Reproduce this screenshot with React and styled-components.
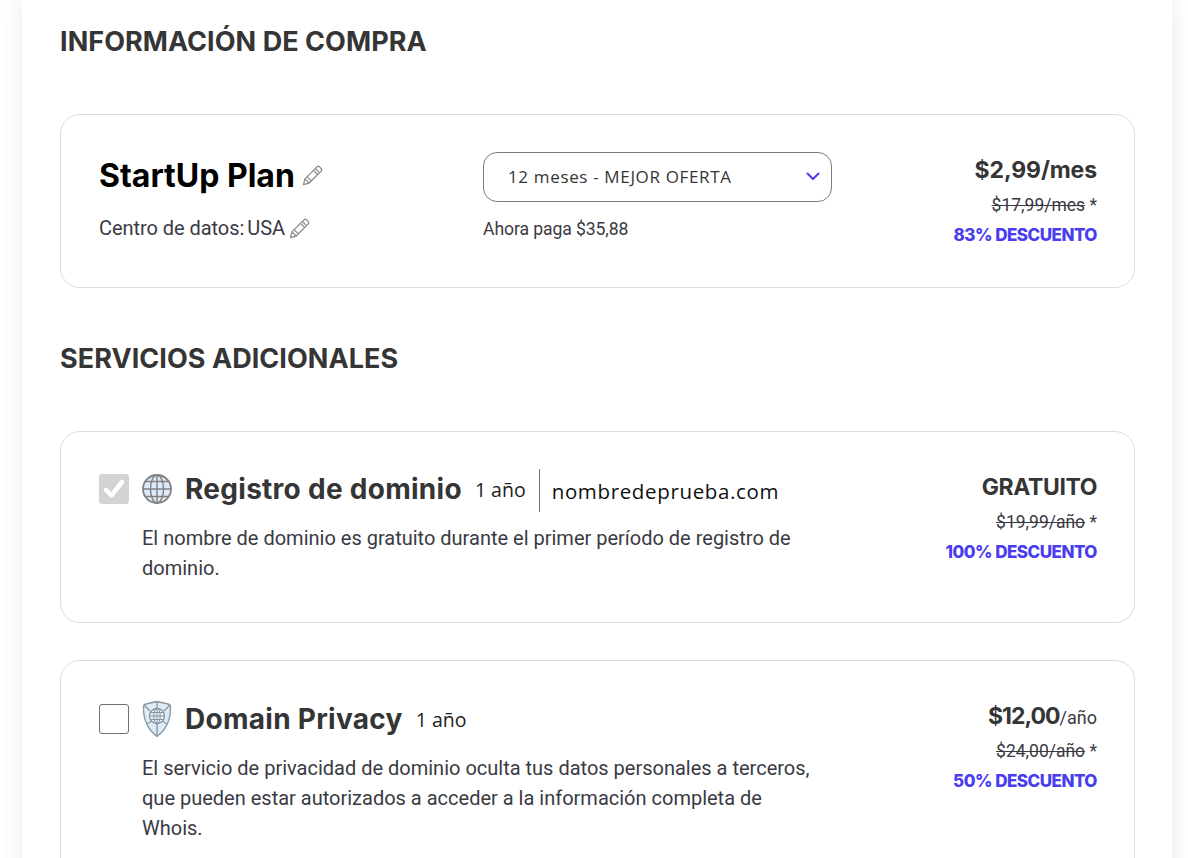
import React from 'react';
import styled, { createGlobalStyle } from 'styled-components';

const GlobalStyle = createGlobalStyle`
  html, body {
    margin: 0;
    padding: 0;
    height: 858px;
    overflow: hidden;
    background: #fff;
    font-family: Roboto, "Liberation Sans", sans-serif;
    color: #353535;
  }
`;

const Page = styled.div`
  width: 1150px;
  margin-left: 22px;
  padding: 0 37px 0 38px;
  box-sizing: border-box;
  background: #fff;
  box-shadow: 0 0 22px rgba(0, 0, 0, 0.09);
  height: 1000px;
`;

const SectionTitle = styled.h2`
  margin: 0;
  height: ${(p) => p.$height}px;
  padding-top: ${(p) => p.$top}px;
  box-sizing: border-box;
  font-family: Inter, sans-serif;
  font-weight: 700;
  font-size: 27px;
  line-height: 34px;
  letter-spacing: 0.05px;
  color: #353535;
`;

const Card = styled.section`
  display: flex;
  justify-content: space-between;
  box-sizing: border-box;
  min-height: ${(p) => p.$height}px;
  margin-bottom: ${(p) => p.$gap || 0}px;
  padding: 37px 37px 0 38px;
  border: 1px solid #dcdcdc;
  border-radius: 20px;
`;

const PlanColumn = styled.div`
  width: 384px;
`;

const PlanName = styled.div`
  display: flex;
  align-items: center;
  gap: 7px;
  height: 46px;
  font-family: Inter, sans-serif;
  font-weight: 700;
  font-size: 32px;
  letter-spacing: 0;
  color: #000;
`;

const DataCenter = styled.div`
  display: flex;
  align-items: center;
  margin-top: 15px;
  font-size: 20px;
  line-height: 30px;
  letter-spacing: -0.05px;
  color: #3a3a44;
`;

const DataValue = styled.span`
  margin-left: 3px;
  margin-right: 4px;
`;

const TermColumn = styled.div`
  width: 349px;
  margin-right: auto;
`;

const SelectBox = styled.div`
  display: flex;
  align-items: center;
  justify-content: space-between;
  box-sizing: border-box;
  height: 50px;
  padding: 0 11px 2px 24px;
  border: 1px solid #7d7d7d;
  border-radius: 14px;
  font-family: "Open Sans", sans-serif;
  font-size: 17px;
  letter-spacing: 0.65px;
  color: #353535;
`;

const PayNow = styled.div`
  margin-top: 15px;
  font-size: 17.6px;
  line-height: 24px;
  letter-spacing: -0.1px;
  color: #3a3a44;
`;

const PriceColumn = styled.div`
  display: flex;
  flex-direction: column;
  align-items: flex-end;
  flex-shrink: 0;
`;

const Price = styled.div`
  font-family: Inter, sans-serif;
  font-weight: 700;
  font-size: 23px;
  line-height: 36px;
  letter-spacing: ${(p) => p.$spacing}px;
  color: #353535;
`;

const PriceUnit = styled.span`
  font-family: Roboto, sans-serif;
  font-weight: 400;
  font-size: 18px;
  line-height: 1;
  letter-spacing: 0;
  color: #3a3a44;
`;

const OldPrice = styled.div`
  margin-top: 2px;
  font-size: 17.5px;
  line-height: 30px;
  color: #3a3a44;
`;

const Struck = styled.span`
  text-decoration: line-through;
`;

const Discount = styled.div`
  font-family: Inter, sans-serif;
  font-weight: 800;
  font-size: 17px;
  line-height: 30px;
  letter-spacing: -0.5px;
  color: #4a3df0;
`;

const ServiceColumn = styled.div`
  width: 716px;
  margin-top: ${(p) => p.$top}px;
`;

const ServiceHead = styled.div`
  display: flex;
  align-items: center;
  height: 42px;
`;

const CheckBox = styled.div`
  display: flex;
  align-items: center;
  justify-content: center;
  box-sizing: border-box;
  flex-shrink: 0;
  width: 30px;
  height: 30px;
  margin-right: 13px;
  border-radius: 3px;
  background: ${(p) => (p.$checked ? '#d3d3d3' : '#fff')};
  border: ${(p) => (p.$checked ? 'none' : '1px solid #6f6f6f')};
`;

const IconSlot = styled.div`
  display: flex;
  flex-shrink: 0;
  width: 30px;
  margin-right: 13px;
`;

const ServiceName = styled.div`
  font-family: Inter, sans-serif;
  font-weight: 700;
  font-size: 28px;
  letter-spacing: 0.28px;
  color: #353535;
`;

const Term = styled.div`
  margin-left: 13px;
  font-family: "Open Sans", sans-serif;
  font-size: 19.5px;
  color: #222;
`;

const DomainName = styled.div`
  display: flex;
  align-items: center;
  height: 43px;
  margin: 3px 0 0 13px;
  padding-left: 12px;
  border-left: 1px solid #6f6f6f;
  font-family: "Open Sans", sans-serif;
  font-size: 20.5px;
  letter-spacing: 0.65px;
  color: #111;
`;

const Description = styled.p`
  width: 680px;
  margin: 13px 0 0 43px;
  font-size: 20px;
  line-height: 30px;
  color: #3a3a44;
`;

const Pencil = ({ size }) => (
  <svg width={size} height={size} viewBox="0 0 22 22" fill="none" stroke="#8a8a8a" strokeWidth="1.3" strokeLinejoin="round">
    <path d="M1.5 20.5l1.6-6L15.6 2a2 2 0 0 1 2.8 0l1.6 1.6a2 2 0 0 1 0 2.8L7.5 18.9z" />
    <path d="M3.1 14.5l4.4 4.4M14 3.6l4.4 4.4M12 5.6l4.4 4.4M5.4 12.2l4.4 4.4" />
  </svg>
);

const Chevron = () => (
  <svg width="14" height="9" viewBox="0 0 14 9" fill="none" stroke="#4a3df0" strokeWidth="2" strokeLinecap="round" strokeLinejoin="round">
    <path d="M1.5 1.5L7 7l5.5-5.5" />
  </svg>
);

const Tick = () => (
  <svg width="22" height="20" viewBox="0 0 22 20" fill="none" stroke="#fff" strokeWidth="4.5" strokeLinecap="round" strokeLinejoin="round">
    <path d="M3 11l5.5 5.5L19 3" />
  </svg>
);

const Globe = () => (
  <svg width="30" height="30" viewBox="0 0 30 30" fill="#dcebfa" stroke="#808080" strokeWidth="1.4">
    <circle cx="15" cy="15" r="14" strokeWidth="1.8" />
    <ellipse cx="15" cy="15" rx="6.5" ry="14" fill="none" />
    <path d="M15 1v28M1 15h28M3.4 7.5h23.2M3.4 22.5h23.2" fill="none" />
  </svg>
);

const Shield = () => (
  <svg width="30" height="38" viewBox="0 0 30 38" fill="#dcebfa" stroke="#8c949c" strokeWidth="1.3" strokeLinejoin="round">
    <path d="M15 1.5l11 2.5q2.500.6 2.500 3c.3 12-3 21.500-13.500 29.500C4.500 28.500 1.200 19 1.500 7q0-2.400 2.500-3z" />
    <path d="M15 1.500V8.500M2 5l6 6M28 5l-6 6M15 36.500V23.500M5 24l5-3M25 24l-5-3" fill="none" />
    <circle cx="15" cy="16" r="7.500" fill="#e9f2fb" />
    <ellipse cx="15" cy="16" rx="3.200" ry="7.500" fill="none" strokeWidth="1" />
    <path d="M15 8.500v15M7.500 16h15M8.700 12.500h12.600M8.700 19.500h12.600" fill="none" strokeWidth="1" />
  </svg>
);

const services = [
  {
    name: 'Registro de dominio',
    checked: true,
    icon: <Globe />,
    domain: 'nombredeprueba.com',
    description: 'El nombre de dominio es gratuito durante el primer período de registro de dominio.',
    price: 'GRATUITO',
    priceSpacing: -0.4,
    oldPrice: '$19,99/año',
    discount: '100% DESCUENTO',
    height: 192,
    gap: 37,
    top: -1,
  },
  {
    name: 'Domain Privacy',
    checked: false,
    icon: <Shield />,
    description: 'El servicio de privacidad de dominio oculta tus datos personales a terceros, que pueden estar autorizados a acceder a la información completa de Whois.',
    price: '$12,00',
    priceSpacing: -1,
    unit: '/año',
    oldPrice: '$24,00/año',
    discount: '50% DESCUENTO',
    height: 260,
    top: 0,
  },
];

const App = () => {
  return (
    <Page>
      <GlobalStyle />
      <SectionTitle $height={114} $top={25}>INFORMACIÓN DE COMPRA</SectionTitle>
      <Card $height={174}>
        <PlanColumn>
          <PlanName>StartUp Plan <Pencil size={21} /></PlanName>
          <DataCenter>
            Centro de datos:<DataValue>USA</DataValue><Pencil size={21} />
          </DataCenter>
        </PlanColumn>
        <TermColumn>
          <SelectBox>
            12 meses - MEJOR OFERTA
            <Chevron />
          </SelectBox>
          <PayNow>Ahora paga $35,88</PayNow>
        </TermColumn>
        <PriceColumn>
          <Price $spacing={-0.1}>$2,99/mes</Price>
          <OldPrice><Struck>$17,99/mes</Struck> *</OldPrice>
          <Discount>83% DESCUENTO</Discount>
        </PriceColumn>
      </Card>
      <SectionTitle $height={143} $top={54}>SERVICIOS ADICIONALES</SectionTitle>
      {services.map((service) => (
        <Card key={service.name} $height={service.height} $gap={service.gap}>
          <ServiceColumn $top={service.top}>
            <ServiceHead>
              <CheckBox $checked={service.checked}>{service.checked && <Tick />}</CheckBox>
              <IconSlot>{service.icon}</IconSlot>
              <ServiceName>{service.name}</ServiceName>
              <Term>1 año</Term>
              {service.domain && <DomainName>{service.domain}</DomainName>}
            </ServiceHead>
            <Description>{service.description}</Description>
          </ServiceColumn>
          <PriceColumn>
            <Price $spacing={service.priceSpacing}>
              {service.price}
              {service.unit && <PriceUnit>{service.unit}</PriceUnit>}
            </Price>
            <OldPrice><Struck>{service.oldPrice}</Struck> *</OldPrice>
            <Discount>{service.discount}</Discount>
          </PriceColumn>
        </Card>
      ))}
    </Page>
  );
};

export default App;
